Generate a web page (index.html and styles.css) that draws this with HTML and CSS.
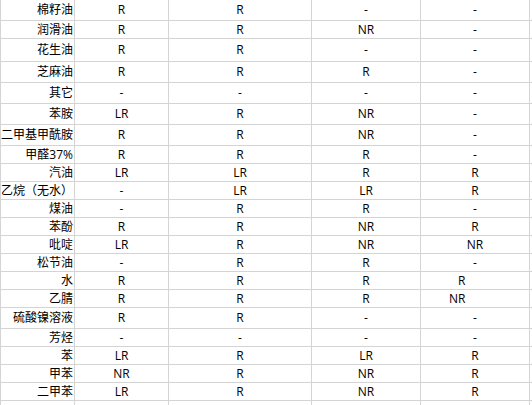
FILE: index.html
```html
<!DOCTYPE html>
<html lang="zh">
<head>
<meta charset="utf-8">
<title>耐化学性表</title>
<link rel="stylesheet" href="styles.css">
</head>
<body>
<div class="sheet">
  <div class="c lbl">棉籽油</div><div class="c">R</div><div class="c">R</div><div class="c">-</div><div class="c">-</div><div class="c"></div>
  <div class="c lbl">润滑油</div><div class="c">R</div><div class="c">R</div><div class="c">NR</div><div class="c">-</div><div class="c"></div>
  <div class="c lbl">花生油</div><div class="c">R</div><div class="c">R</div><div class="c">-</div><div class="c">-</div><div class="c"></div>
  <div class="c lbl">芝麻油</div><div class="c">R</div><div class="c">R</div><div class="c">R</div><div class="c">-</div><div class="c"></div>
  <div class="c lbl">其它</div><div class="c">-</div><div class="c">-</div><div class="c">-</div><div class="c">-</div><div class="c"></div>
  <div class="c lbl">苯胺</div><div class="c">LR</div><div class="c">R</div><div class="c">NR</div><div class="c">-</div><div class="c"></div>
  <div class="c lbl">二甲基甲酰胺</div><div class="c">R</div><div class="c">R</div><div class="c">NR</div><div class="c">-</div><div class="c"></div>
  <div class="c lbl">甲醛37%</div><div class="c">R</div><div class="c">R</div><div class="c">R</div><div class="c">-</div><div class="c"></div>
  <div class="c lbl">汽油</div><div class="c">LR</div><div class="c">LR</div><div class="c">R</div><div class="c">R</div><div class="c"></div>
  <div class="c lbl">乙烷（无水）</div><div class="c">-</div><div class="c">LR</div><div class="c">LR</div><div class="c">R</div><div class="c"></div>
  <div class="c lbl">煤油</div><div class="c">-</div><div class="c">R</div><div class="c">R</div><div class="c">-</div><div class="c"></div>
  <div class="c lbl">苯酚</div><div class="c">R</div><div class="c">R</div><div class="c">NR</div><div class="c">R</div><div class="c"></div>
  <div class="c lbl">吡啶</div><div class="c">LR</div><div class="c">R</div><div class="c">NR</div><div class="c">NR</div><div class="c"></div>
  <div class="c lbl">松节油</div><div class="c">-</div><div class="c">R</div><div class="c">R</div><div class="c">-</div><div class="c"></div>
  <div class="c lbl">水</div><div class="c">R</div><div class="c">R</div><div class="c">R</div><div class="c left pad-r">R</div><div class="c"></div>
  <div class="c lbl">乙腈</div><div class="c">R</div><div class="c">R</div><div class="c">R</div><div class="c left pad-nr">NR</div><div class="c"></div>
  <div class="c lbl">硫酸镍溶液</div><div class="c">R</div><div class="c">R</div><div class="c">-</div><div class="c">-</div><div class="c"></div>
  <div class="c lbl">芳烃</div><div class="c">-</div><div class="c">-</div><div class="c">-</div><div class="c">-</div><div class="c"></div>
  <div class="c lbl">苯</div><div class="c">LR</div><div class="c">R</div><div class="c">LR</div><div class="c">R</div><div class="c"></div>
  <div class="c lbl">甲苯</div><div class="c">NR</div><div class="c">R</div><div class="c">NR</div><div class="c">R</div><div class="c"></div>
  <div class="c lbl">二甲苯</div><div class="c">LR</div><div class="c">R</div><div class="c">NR</div><div class="c">R</div><div class="c"></div>
  <div class="c lbl"></div><div class="c"></div><div class="c"></div><div class="c"></div><div class="c"></div><div class="c"></div>
</div>
</body>
</html>
```
FILE: styles.css
```css
html, body {
  margin: 0;
  padding: 0;
  background: #ffffff;
}

body {
  width: 532px;
  height: 405px;
  overflow: hidden;
}

.sheet {
  display: grid;
  width: 532px;
  box-sizing: border-box;
  padding-left: 1px;
  background: #d4d4d4;
  gap: 1px;
  grid-template-columns: 73px 93px 142px 108px 108px 2px;
  grid-template-rows: 20px 17px 22px 20px 20px 20px 20px 17px 17px 17px 17px 17px 17px 17px 17px 17px 20px 17px 17px 17px 17px 20px;
  font-family: "Open Sans", "Noto Sans CJK SC", sans-serif;
  font-size: 12px;
  color: #000000;
}

.c {
  background: #ffffff;
  display: flex;
  align-items: center;
  justify-content: center;
  white-space: nowrap;
  line-height: 1;
  overflow: visible;
}

.lbl {
  justify-content: flex-end;
  padding-right: 1px;
}

.left {
  justify-content: flex-start;
}

.pad-r {
  padding-left: 37px;
}

.pad-nr {
  padding-left: 28px;
}
```
